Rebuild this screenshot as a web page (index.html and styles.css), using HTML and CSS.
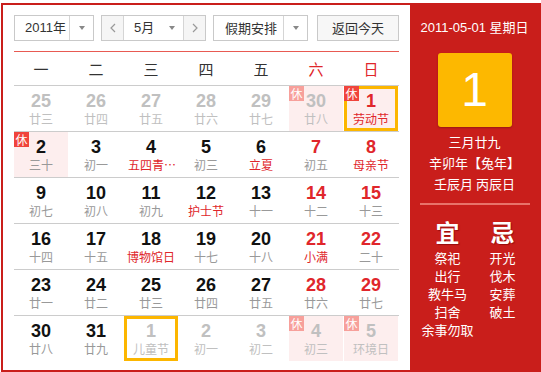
FILE: index.html
```html
<!DOCTYPE html>
<html lang="zh-CN">
<head>
<meta charset="utf-8">
<title>万年历</title>
<link rel="stylesheet" href="styles.css">
</head>
<body>
<div class="cal">
  <div class="main">
    <div class="bar">
      <div class="sel year"><span class="val">2011年</span><span class="arr"><i></i></span></div>
      <div class="sel month">
        <span class="nav"><svg width="6" height="10" viewBox="0 0 6 10"><polyline points="5,1 1,5 5,9" fill="none" stroke="#999" stroke-width="1.2"/></svg></span>
        <span class="val mval">5月<i></i></span>
        <span class="nav"><svg width="6" height="10" viewBox="0 0 6 10"><polyline points="1,1 5,5 1,9" fill="none" stroke="#999" stroke-width="1.2"/></svg></span>
      </div>
      <div class="sel hol"><span class="val">假期安排</span><span class="arr"><i></i></span></div>
      <div class="btn">返回今天</div>
    </div>
    <div class="head">
      <span>一</span><span>二</span><span>三</span><span>四</span><span>五</span><span class="we">六</span><span class="we">日</span>
    </div>
    <div class="week">
      <div class="d o"><b>25</b><em>廿三</em></div>
      <div class="d o"><b>26</b><em>廿四</em></div>
      <div class="d o"><b>27</b><em>廿五</em></div>
      <div class="d o"><b>28</b><em>廿六</em></div>
      <div class="d o"><b>29</b><em>廿七</em></div>
      <div class="d o h"><s>休</s><b>30</b><em>廿八</em></div>
      <div class="d r h today"><s>休</s><b>1</b><em class="f">劳动节</em></div>
    </div>
    <div class="week">
      <div class="d h"><s>休</s><b>2</b><em>三十</em></div>
      <div class="d"><b>3</b><em>初一</em></div>
      <div class="d"><b>4</b><em class="f cut">五四青年节</em></div>
      <div class="d"><b>5</b><em>初三</em></div>
      <div class="d"><b>6</b><em class="f">立夏</em></div>
      <div class="d r"><b>7</b><em>初五</em></div>
      <div class="d r"><b>8</b><em class="f">母亲节</em></div>
    </div>
    <div class="week">
      <div class="d"><b>9</b><em>初七</em></div>
      <div class="d"><b>10</b><em>初八</em></div>
      <div class="d"><b>11</b><em>初九</em></div>
      <div class="d"><b>12</b><em class="f">护士节</em></div>
      <div class="d"><b>13</b><em>十一</em></div>
      <div class="d r"><b>14</b><em>十二</em></div>
      <div class="d r"><b>15</b><em>十三</em></div>
    </div>
    <div class="week">
      <div class="d"><b>16</b><em>十四</em></div>
      <div class="d"><b>17</b><em>十五</em></div>
      <div class="d"><b>18</b><em class="f">博物馆日</em></div>
      <div class="d"><b>19</b><em>十七</em></div>
      <div class="d"><b>20</b><em>十八</em></div>
      <div class="d r"><b>21</b><em class="f">小满</em></div>
      <div class="d r"><b>22</b><em>二十</em></div>
    </div>
    <div class="week">
      <div class="d"><b>23</b><em>廿一</em></div>
      <div class="d"><b>24</b><em>廿二</em></div>
      <div class="d"><b>25</b><em>廿三</em></div>
      <div class="d"><b>26</b><em>廿四</em></div>
      <div class="d"><b>27</b><em>廿五</em></div>
      <div class="d r"><b>28</b><em>廿六</em></div>
      <div class="d r"><b>29</b><em>廿七</em></div>
    </div>
    <div class="week last">
      <div class="d"><b>30</b><em>廿八</em></div>
      <div class="d"><b>31</b><em>廿九</em></div>
      <div class="d o mark"><b>1</b><em>儿童节</em></div>
      <div class="d o"><b>2</b><em>初一</em></div>
      <div class="d o"><b>3</b><em>初二</em></div>
      <div class="d o h"><s>休</s><b>4</b><em>初三</em></div>
      <div class="d o h"><s>休</s><b>5</b><em>环境日</em></div>
    </div>
  </div>
  <div class="side">
    <div class="date">2011-05-01 星期日</div>
    <div class="big">1</div>
    <div class="lunar">
      <div>三月廿九</div>
      <div>辛卯年【兔年】</div>
      <div>壬辰月 丙辰日</div>
    </div>
    <div class="line"></div>
    <div class="yj">
      <div class="col">
        <div class="t">宜</div>
        <div>祭祀</div><div>出行</div><div>教牛马</div><div>扫舍</div><div>余事勿取</div>
      </div>
      <div class="col">
        <div class="t">忌</div>
        <div>开光</div><div>伐木</div><div>安葬</div><div>破土</div>
      </div>
    </div>
  </div>
</div>
</body>
</html>
```

FILE: styles.css
```css
html, body { margin: 0; padding: 0; background: #fff; }
body { font-family: "Noto Sans CJK SC", sans-serif; }

.cal {
  display: flex;
  box-sizing: border-box;
  width: 540px;
  height: 369px;
  margin: 3px 0 0 1px;
  border: 2px solid #c91e1b;
}

.main {
  box-sizing: border-box;
  width: 407px;
  padding: 10px 11px 0;
}

.bar { display: flex; height: 26px; margin-bottom: 10px; }
.sel, .btn {
  display: flex;
  box-sizing: border-box;
  height: 26px;
  border: 1px solid #c9c9c9;
  background: #fff;
  font-size: 13px;
  color: #333;
  line-height: 24px;
}
.year { width: 80px; margin-right: 7px; }
.month { width: 105px; margin-right: 7px; }
.hol { width: 95px; margin-right: 9px; }
.btn { width: 82px; justify-content: center; background: #f7f7f7; font-size: 13px; }

.val { flex: 1; padding-left: 10px; font-family: "Liberation Sans", "Noto Sans CJK SC", sans-serif; }
.hol .val { padding-left: 11px; font-family: "Noto Sans CJK SC", sans-serif; }
.arr {
  width: 23px;
  border-left: 1px solid #d5d5d5;
  display: flex; align-items: center; justify-content: center;
}
.arr i, .mval i {
  display: block; width: 0; height: 0;
  border-style: solid; border-width: 4px 3px 0;
  border-color: #888 transparent transparent;
}
.mval { display: flex; align-items: center; padding-left: 10px; padding-right: 8px; justify-content: space-between; border-left: 1px solid #d5d5d5; border-right: 1px solid #d5d5d5; }
.nav { width: 21px; display: flex; align-items: center; justify-content: center; background: #f5f5f5; }

.head {
  display: grid;
  grid-template-columns: repeat(7, 55px);
  height: 33px;
  border-top: 1px solid #e85a52;
  border-bottom: 1px solid #ccc;
  font-size: 15px;
  line-height: 33px;
  color: #333;
}
.head span { text-align: center; padding-right: 1px; }
.head .we { color: #e0262b; }

.week {
  display: grid;
  grid-template-columns: repeat(7, 55px);
  height: 45px;
  border-bottom: 1px solid #ccc;
}
.week.last { border-bottom: none; }

.d {
  position: relative;
  box-sizing: border-box;
  border-right: 1px solid transparent;
  background-clip: padding-box;
  padding: 5px 0 0;
  text-align: center;
  overflow: hidden;
}
.d b {
  display: block;
  font-family: "Liberation Sans", Arial, sans-serif;
  font-weight: bold;
  font-size: 18px;
  line-height: 20px;
  color: #111;
}
.d em {
  display: block;
  font-style: normal;
  font-size: 12px;
  line-height: 16px;
  color: #999;
  white-space: nowrap;
  overflow: hidden;
  text-overflow: ellipsis;
}
.d em.cut { padding: 0 0 0 4px; text-align: left; }
.d em.f { color: #e0262b; }
.d.r b { color: #e0262b; }
.d.o b, .d.o em { color: #c0c0c0; }
.d.h { background-color: #fdeeee; }
.d s {
  position: absolute; left: 0; top: 0;
  width: 15px; height: 15px;
  background: #f0443c;
  color: #fff;
  font-size: 12px; line-height: 15px;
  text-decoration: none; text-align: center;
}
.d.o s { background: #f7a09b; }
.today, .mark { box-shadow: inset 0 0 0 3px #fcb600; }

.side {
  flex: 1;
  background: #c91e1b;
  color: #fff;
  display: flex;
  flex-direction: column;
  align-items: center;
}
.date {
  margin-top: 13px;
  font-family: "Liberation Sans", "Noto Sans CJK SC", sans-serif;
  font-size: 13px;
  line-height: 20px;
}
.big {
  margin-top: 15px;
  width: 74px; height: 74px;
  background: #fdb800;
  border-radius: 3px;
  box-shadow: 0 1px 2px rgba(0,0,0,.25);
  font-family: "Liberation Sans", Arial, sans-serif;
  font-size: 48px;
  line-height: 74px;
  text-align: center;
}
.lunar { margin-top: 4px; font-size: 13px; line-height: 21px; text-align: center; }
.line { margin-top: 9px; width: 110px; height: 2px; background: #e8736a; }
.yj {
  align-self: flex-start;
  margin: 12px 0 0 10px;
  display: grid;
  grid-template-columns: 55px 55px;
  font-size: 13px;
  line-height: 18px;
  text-align: center;
}
.yj .t {
  font-size: 24px;
  font-weight: bold;
  line-height: 30px;
  margin-bottom: 2px;
  text-shadow: 1px 1px 1px rgba(120,0,0,.6);
}
```
